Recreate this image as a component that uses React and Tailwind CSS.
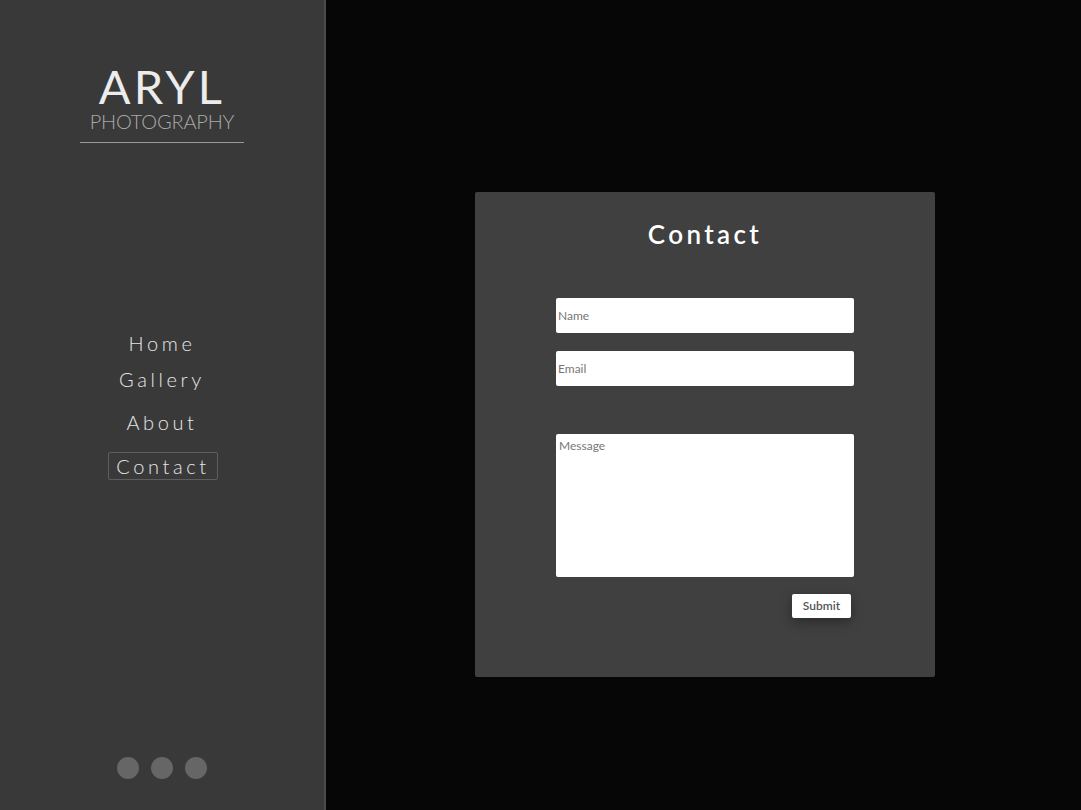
import React from 'react';

const App = () => {
  return (
    <div
      className="flex h-[810px] w-full bg-[#060606]"
      style={{ fontFamily: 'Lato, "Open Sans", sans-serif' }}
    >
      <aside className="flex w-[326px] shrink-0 flex-col items-center border-r-2 border-[#4b4b4b] bg-[#393939]">
        <div className="mt-[66px] flex flex-col items-center">
          <h1 className="text-[47px] font-normal leading-[40px] tracking-[0.07em] text-[#ececec]">ARYL</h1>
          <p className="mt-[5px] text-[20px] font-light leading-[20px] tracking-[-0.01em] text-[#a9a9a9]">PHOTOGRAPHY</p>
          <div className="mt-[11px] h-px w-[164px] bg-[#9a9a9a]" />
        </div>

        <nav className="mt-[186px] flex flex-col items-center">
          <a className="text-[20px] font-light leading-[28px] tracking-[0.18em] text-[#e6e6e6]">Home</a>
          <a className="mt-[8px] text-[20px] font-light leading-[28px] tracking-[0.18em] text-[#e6e6e6]">Gallery</a>
          <a className="mt-[15px] text-[20px] font-light leading-[28px] tracking-[0.18em] text-[#e6e6e6]">About</a>
          <a className="mt-[16px] ml-[2px] rounded-[2px] border border-[#5e5e5e] px-[7px] text-[20px] font-light leading-[26px] tracking-[0.18em] text-[#e6e6e6]">Contact</a>
        </nav>

        <div className="mt-auto mb-[31px] flex gap-[12px]">
          <span className="h-[22px] w-[22px] rounded-full bg-[#666666]" />
          <span className="h-[22px] w-[22px] rounded-full bg-[#666666]" />
          <span className="h-[22px] w-[22px] rounded-full bg-[#666666]" />
        </div>
      </aside>

      <main className="flex flex-1 items-start pl-[149px] pt-[192px]">
        <section className="flex h-[485px] w-[460px] flex-col items-center rounded-[2px] bg-[#404040]">
          <h2 className="mt-[24px] text-[26px] font-semibold leading-[36px] tracking-[0.13em] text-white">Contact</h2>
          <form className="mt-[46px] flex w-[298px] flex-col">
            <input
              type="text"
              placeholder="Name"
              className="h-[35px] w-full rounded-[2px] bg-white px-[2px] text-[12px] text-[#555] placeholder:text-[#777] focus:outline-none"
            />
            <input
              type="text"
              placeholder="Email"
              className="mt-[18px] h-[35px] w-full rounded-[2px] bg-white px-[2px] text-[12px] text-[#555] placeholder:text-[#777] focus:outline-none"
            />
            <textarea
              placeholder="Message"
              className="mt-[48px] h-[143px] w-full resize-none rounded-[2px] bg-white px-[3px] py-[3px] text-[12px] text-[#555] placeholder:text-[#777] focus:outline-none"
            />
            <div className="mt-[17px] flex justify-end pr-[3px]">
              <button
                type="button"
                className="h-[24px] w-[59px] rounded-[2px] bg-white text-[12px] font-semibold text-[#555] shadow-[0_4px_12px_rgba(0,0,0,0.35)]"
              >
                Submit
              </button>
            </div>
          </form>
        </section>
      </main>
    </div>
  );
};

export default App;
